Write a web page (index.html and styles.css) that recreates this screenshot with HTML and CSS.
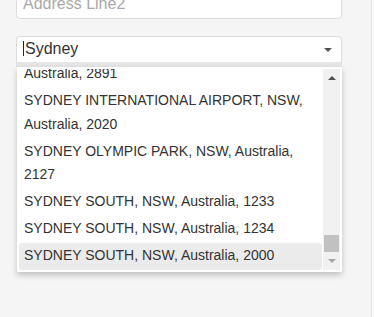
FILE: index.html
```html
<!DOCTYPE html>
<html lang="en">

<head>
    <meta charset="UTF-8">
    <meta name="viewport" content="width=device-width, initial-scale=1.0">
    <title>Address</title>
    <link rel="stylesheet" href="styles.css">
</head>

<body>

    <div class="page">
        <div class="form">
            <!-- 주소 두번째 줄 -->
            <input class="field" type="text" placeholder="Address Line2">

            <!-- 도시 선택 -->
            <div class="combo">
                <div class="combo-box">
                    <span class="value">Sydney</span>
                    <span class="caret"></span>
                </div>

                <div class="dropdown">
                    <div class="list">
                        <div class="items">
                            <div class="item">SYDNEY DOMESTIC AIRPORT, NSW, Australia, 2891</div>
                            <div class="item">SYDNEY INTERNATIONAL AIRPORT, NSW, Australia, 2020</div>
                            <div class="item">SYDNEY OLYMPIC PARK, NSW, Australia, 2127</div>
                            <div class="item">SYDNEY SOUTH, NSW, Australia, 1233</div>
                            <div class="item">SYDNEY SOUTH, NSW, Australia, 1234</div>
                            <div class="item active">SYDNEY SOUTH, NSW, Australia, 2000</div>
                        </div>
                    </div>
                    <div class="scrollbar">
                        <span class="arrow up"></span>
                        <span class="track">
                            <span class="thumb"></span>
                        </span>
                        <span class="arrow down"></span>
                    </div>
                </div>
            </div>
        </div>
    </div>

</body>

</html>
```

FILE: styles.css
```css
* {
    box-sizing: border-box;
}

body {
    margin: 0;
    background-color: #fafafa;
    font-family: "Liberation Sans", Arial, sans-serif;
}

.page {
    width: 372px;
    height: 317px;
    background-color: #f5f5f5;
    border-right: 1px solid #e3e3e3;
    padding-left: 16px;
    overflow: hidden;
}

.form {
    width: 326px;
    display: flex;
    flex-direction: column;
}

.field {
    margin-top: -15px;
    height: 34px;
    border: 1px solid #dcdcdc;
    border-radius: 4px;
    padding: 3px 6px 0;
    font-family: inherit;
    font-size: 16px;
    color: #333;
    background-color: white;
}

.field::placeholder {
    color: #a9a9a9;
}

.combo {
    margin-top: 17px;
}

.combo-box {
    height: 31px;
    background-color: white;
    border: 1px solid #dcdcdc;
    border-bottom: 5px solid #e6e6e6;
    border-radius: 4px 4px 0 0;
    display: flex;
    align-items: center;
    padding: 0 9px 2px 6px;
    font-size: 16px;
    color: #333;
}

/* 입력 커서 */
.value {
    flex: 1;
    border-left: 1px solid #222;
    padding-left: 1px;
    line-height: 15px;
}

.caret {
    width: 0;
    height: 0;
    border-left: 4px solid transparent;
    border-right: 4px solid transparent;
    border-top: 4px solid #555;
    margin-top: 2px;
}

.dropdown {
    height: 205px;
    margin-left: 1px;
    background-color: white;
    box-shadow: 0 3px 6px rgba(0, 0, 0, 0.22);
    padding: 2px;
    display: flex;
    gap: 1px;
}

.list {
    flex: 1;
    overflow: hidden;
}

/* 목록 맨 아래까지 스크롤된 상태 */
.items {
    margin-top: -32px;
}

.item {
    padding: 1.75px 5px;
    line-height: 23.5px;
    font-size: 14px;
    color: #333;
    border-radius: 3px;
}

.item.active {
    background-color: #ebebeb;
}

.scrollbar {
    width: 17px;
    background-color: #f1f1f1;
    display: flex;
    flex-direction: column;
    align-items: center;
}

.arrow {
    width: 0;
    height: 0;
    border-left: 4px solid transparent;
    border-right: 4px solid transparent;
    margin: 7px 0;
}

.arrow.up {
    border-bottom: 4px solid #505050;
}

.arrow.down {
    border-top: 4px solid #a3a3a3;
}

.track {
    flex: 1;
    width: 100%;
    display: flex;
    flex-direction: column;
    justify-content: flex-end;
    align-items: center;
}

.thumb {
    width: 15px;
    height: 17px;
    background-color: #c1c1c1;
}
```
